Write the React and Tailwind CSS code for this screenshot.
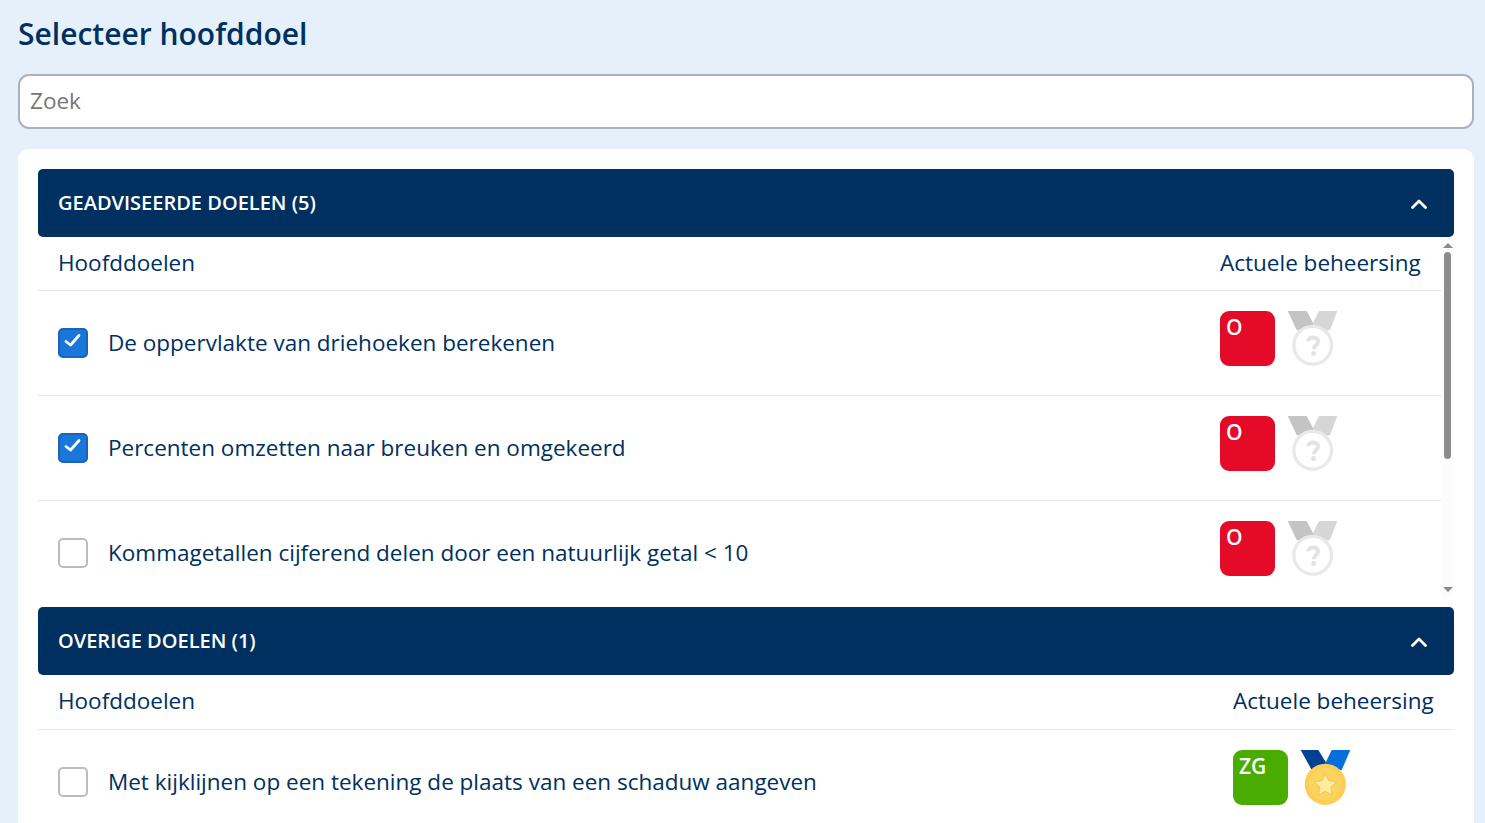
import React from "react";

const Chevron = () => (
  <svg width="18" height="12" viewBox="0 0 18 12" fill="none" aria-hidden="true">
    <path d="M2.5 10.5 L9 4 L15.5 10.5" stroke="#ffffff" strokeWidth="2.8" strokeLinecap="round" strokeLinejoin="round" />
  </svg>
);

const Checkbox = ({ checked }) =>
  checked ? (
    <span className="block h-[30px] w-[30px] shrink-0 rounded-[5px] border-2 border-[#1a63b5] bg-[#1976da]">
      <svg width="26" height="26" viewBox="0 0 26 26" fill="none" className="block" aria-hidden="true">
        <path d="M6 11.5 L10.6 15 L19 5.5" stroke="#ffffff" strokeWidth="2.8" strokeLinecap="round" strokeLinejoin="round" />
      </svg>
    </span>
  ) : (
    <span className="h-[30px] w-[30px] shrink-0 rounded-[5px] border-2 border-[#bcbcbc] bg-white" />
  );

const SilverMedal = () => (
  <svg width="52" height="56" viewBox="0 0 52 56" className="shrink-0" aria-hidden="true">
    <path d="M0.7 0 H19.7 L26 12 L26 22 L9.7 19 Z" fill="#c4c4c4" />
    <path d="M50.3 0 H32 L26 12 L26 22 L43 19 Z" fill="#d6d6d6" />
    <circle cx="25.7" cy="34.3" r="18.9" fill="#ffffff" stroke="#e9e9e9" strokeWidth="3.4" />
    <path d="M21.2 30.5 C21.2 25 31 25 31 30.5 C31 34.5 26.8 34 26.8 38.3" fill="none" stroke="#e3e3e3" strokeWidth="4" />
    <circle cx="26.6" cy="42.6" r="2.5" fill="#e3e3e3" />
  </svg>
);

const GoldMedal = () => (
  <svg width="52" height="56" viewBox="0 0 52 56" className="shrink-0" aria-hidden="true">
    <path d="M0.7 0 H18.3 L27 14 L27 24 L11.7 20 Z" fill="#004391" />
    <path d="M50.3 0 H31.7 L24.5 15 L24.5 24 L41.7 20 Z" fill="#0570dc" />
    <circle cx="25.3" cy="34.3" r="20.6" fill="#fdce53" />
    <circle cx="25.3" cy="34.3" r="16.5" fill="#fbd35f" />
    <path d="M25.3 23.8 L28.7 30.7 L36.3 31.8 L30.8 37.2 L32.1 44.8 L25.3 41.2 L18.5 44.8 L19.8 37.2 L14.3 31.8 L21.9 30.7 Z" fill="#feec9f" stroke="#f0bf4b" strokeWidth="0.8" strokeLinejoin="round" />
  </svg>
);

const Badge = ({ label, color }) => (
  <span className={`block h-[55px] w-[55px] shrink-0 rounded-[9px] px-[6px] pt-[3px] text-[21px] leading-[27px] font-semibold text-white ${color}`}>
    {label}
  </span>
);

const Row = ({ text, checked, last, badge = "O", color = "bg-[#e40a28]", medal = <SilverMedal /> }) => (
  <div className={`flex h-[105px] items-center border-b ${last ? "border-transparent" : "border-[#e6e6e6]"}`}>
    <div className="flex flex-1 items-center gap-[20px] pl-[20px]">
      <Checkbox checked={checked} />
      <span className="text-[22.5px] leading-[32px] text-[#00305f]">{text}</span>
    </div>
    <div className="flex h-[105px] w-[221px] shrink-0 gap-[12px] pt-[20px]">
      <Badge label={badge} color={color} />
      {medal}
    </div>
  </div>
);

const Head = ({ tall }) => (
  <div className={`flex items-center justify-between border-b border-[#e6e6e6] pb-[2px] pl-[20px] text-[22.5px] leading-[32px] text-[#00305f] ${tall ? "h-[55px]" : "h-[54px]"}`}>
    <span>Hoofddoelen</span>
    <span className="w-[221px] shrink-0">Actuele beheersing</span>
  </div>
);

const SectionHeader = ({ title }) => (
  <div className="flex h-[68px] items-center justify-between rounded-[5px] bg-[#00305f] pl-[20px] pr-[26px]">
    <span className="text-[20px] font-semibold text-white">{title}</span>
    <Chevron />
  </div>
);

const Scrollbar = () => (
  <div className="flex w-[13px] shrink-0 flex-col items-center bg-[#fcfcfc]">
    <span className="mt-[6px] h-0 w-0 border-x-[5px] border-b-[5px] border-x-transparent border-b-[#8a8a8a]" />
    <span className="mt-[4px] h-[207px] w-[7px] rounded-[4px] bg-[#8c8c8c]" />
    <span className="mt-[128px] h-0 w-0 border-x-[5px] border-t-[5px] border-x-transparent border-t-[#8a8a8a]" />
  </div>
);

export default function App() {
  return (
    <div className="h-[823px] w-full overflow-hidden bg-[#e5f0fb] pl-[18px] pr-[11px] font-['Open_Sans',sans-serif]">
      <h1 className="flex h-[74px] items-center pb-[7px] text-[30px] font-semibold text-[#00305f]">Selecteer hoofddoel</h1>
      <div className="flex h-[55px] items-center rounded-[11px] border-2 border-[#aab2bf] bg-white px-[10px] pb-[2px] text-[22.5px] text-[#767676]">Zoek</div>
      <div className="mt-[20px] flex flex-col gap-[10px] rounded-t-[11px] bg-white px-[20px] pt-[20px] pb-[40px]">
        <div>
          <SectionHeader title="GEADVISEERDE DOELEN (5)" />
          <div className="flex h-[360px] overflow-hidden">
            <div className="min-w-0 flex-1">
              <Head />
              <Row text="De oppervlakte van driehoeken berekenen" checked />
              <Row text="Percenten omzetten naar breuken en omgekeerd" checked />
              <Row text="Kommagetallen cijferend delen door een natuurlijk getal < 10" />
            </div>
            <Scrollbar />
          </div>
        </div>
        <div>
          <SectionHeader title="OVERIGE DOELEN (1)" />
          <Head tall />
          <Row text="Met kijklijnen op een tekening de plaats van een schaduw aangeven" last badge="ZG" color="bg-[#4aac00]" medal={<GoldMedal />} />
        </div>
      </div>
    </div>
  );
}
